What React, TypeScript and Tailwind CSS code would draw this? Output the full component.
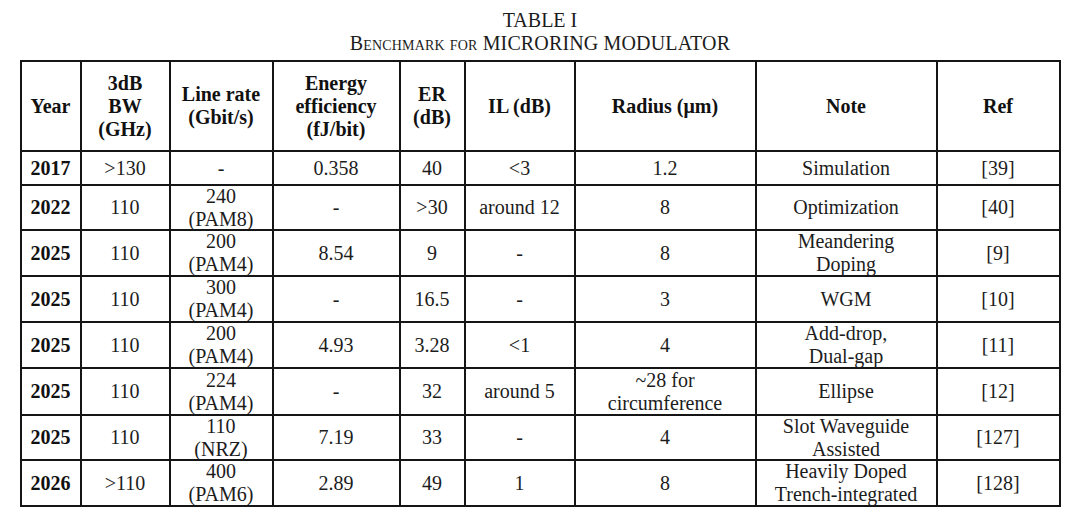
type Row = {
  year: string;
  bw: string;
  rate: string[];
  energy: string;
  er: string;
  il: string;
  radius: string[];
  note: string[];
  ref: string;
  h: string;
};

// h is the inner height of a row (line-to-line distance minus the 2px rule)
const rows: Row[] = [
  { year: '2017', bw: '>130', rate: ['-'], energy: '0.358', er: '40', il: '<3', radius: ['1.2'], note: ['Simulation'], ref: '[39]', h: 'h-[32px]' },
  { year: '2022', bw: '110', rate: ['240', '(PAM8)'], energy: '-', er: '>30', il: 'around 12', radius: ['8'], note: ['Optimization'], ref: '[40]', h: 'h-[43px]' },
  { year: '2025', bw: '110', rate: ['200', '(PAM4)'], energy: '8.54', er: '9', il: '-', radius: ['8'], note: ['Meandering', 'Doping'], ref: '[9]', h: 'h-[44px]' },
  { year: '2025', bw: '110', rate: ['300', '(PAM4)'], energy: '-', er: '16.5', il: '-', radius: ['3'], note: ['WGM'], ref: '[10]', h: 'h-[44px]' },
  { year: '2025', bw: '110', rate: ['200', '(PAM4)'], energy: '4.93', er: '3.28', il: '<1', radius: ['4'], note: ['Add-drop,', 'Dual-gap'], ref: '[11]', h: 'h-[44px]' },
  { year: '2025', bw: '110', rate: ['224', '(PAM4)'], energy: '-', er: '32', il: 'around 5', radius: ['~28 for', 'circumference'], note: ['Ellipse'], ref: '[12]', h: 'h-[45px]' },
  { year: '2025', bw: '110', rate: ['110', '(NRZ)'], energy: '7.19', er: '33', il: '-', radius: ['4'], note: ['Slot Waveguide', 'Assisted'], ref: '[127]', h: 'h-[43px]' },
  { year: '2026', bw: '>110', rate: ['400', '(PAM6)'], energy: '2.89', er: '49', il: '1', radius: ['8'], note: ['Heavily Doped', 'Trench-integrated'], ref: '[128]', h: 'h-[44px]' },
];

// multi-line cell content, centred in a box of fixed height; text may spill over the rules like in the scan
function Lines({ items, h }: { items: string[]; h: string }) {
  return (
    <div className={`${h} flex flex-col items-center justify-center overflow-visible`}>
      {items.map((t, i) => (
        <span key={i} className="block whitespace-nowrap">
          {t}
        </span>
      ))}
    </div>
  );
}

const cell = 'border-2 border-[#151515] p-0 text-center align-middle';

export default function App() {
  return (
    <div className="w-[1080px] h-[530px] bg-white text-[#1c1c1c] font-['Liberation_Serif','Times_New_Roman',serif] text-[20px] leading-[23px]">
      {/* Caption */}
      <div className="pt-[9px] text-center leading-[23px]">
        <div>TABLE I</div>
        <div className="[font-variant-caps:small-caps] tracking-[0.15px]">Benchmark for MICRORING MODULATOR</div>
      </div>

      <table className="mx-auto mt-[5px] w-[1039px] table-fixed border-collapse">
        <colgroup>
          <col className="w-[60px]" />
          <col className="w-[89px]" />
          <col className="w-[103px]" />
          <col className="w-[127px]" />
          <col className="w-[65px]" />
          <col className="w-[110px]" />
          <col className="w-[181px]" />
          <col className="w-[181px]" />
          <col className="w-[123px]" />
        </colgroup>
        <thead>
          <tr className="font-bold text-[#111]">
            <th className={cell}>
              <Lines h="h-[88px]" items={['Year']} />
            </th>
            <th className={cell}>
              <Lines h="h-[88px]" items={['3dB', 'BW', '(GHz)']} />
            </th>
            <th className={cell}>
              <Lines h="h-[88px]" items={['Line rate', '(Gbit/s)']} />
            </th>
            <th className={cell}>
              <Lines h="h-[88px]" items={['Energy', 'efficiency', '(fJ/bit)']} />
            </th>
            <th className={cell}>
              <Lines h="h-[88px]" items={['ER', '(dB)']} />
            </th>
            <th className={cell}>
              <Lines h="h-[88px]" items={['IL (dB)']} />
            </th>
            <th className={cell}>
              <Lines h="h-[88px]" items={['Radius (μm)']} />
            </th>
            <th className={cell}>
              <Lines h="h-[88px]" items={['Note']} />
            </th>
            <th className={cell}>
              <Lines h="h-[88px]" items={['Ref']} />
            </th>
          </tr>
        </thead>
        <tbody>
          {rows.map((r, i) => (
            <tr key={i}>
              <td className={`${cell} font-bold text-[#111]`}>
                <Lines h={r.h} items={[r.year]} />
              </td>
              <td className={cell}>
                <Lines h={r.h} items={[r.bw]} />
              </td>
              <td className={cell}>
                <Lines h={r.h} items={r.rate} />
              </td>
              <td className={cell}>
                <Lines h={r.h} items={[r.energy]} />
              </td>
              <td className={cell}>
                <Lines h={r.h} items={[r.er]} />
              </td>
              <td className={cell}>
                <Lines h={r.h} items={[r.il]} />
              </td>
              <td className={cell}>
                <Lines h={r.h} items={r.radius} />
              </td>
              <td className={cell}>
                <Lines h={r.h} items={r.note} />
              </td>
              <td className={cell}>
                <Lines h={r.h} items={[r.ref]} />
              </td>
            </tr>
          ))}
        </tbody>
      </table>
    </div>
  );
}
